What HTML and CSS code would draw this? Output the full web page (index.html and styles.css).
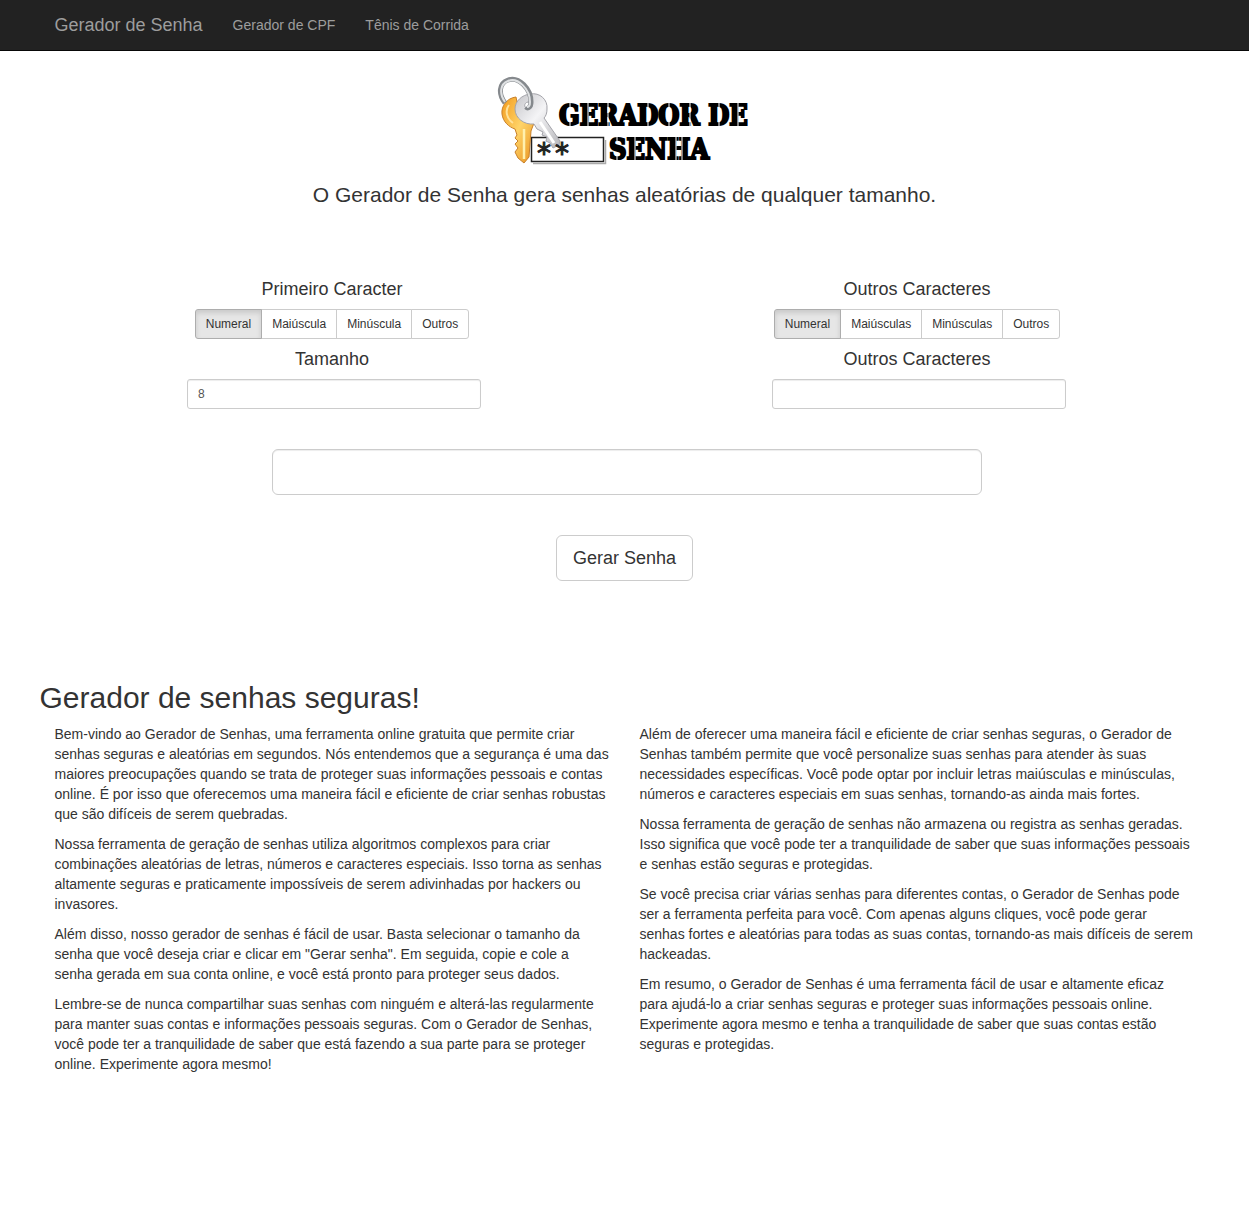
FILE: index.html
```html
<!DOCTYPE html>
<html lang="pt-BR">
<head>
<meta charset="utf-8">
<meta name="viewport" content="width=device-width, initial-scale=1">
<title>Gerador de Senha</title>
<link rel="stylesheet" href="styles.css">
</head>
<body>
<nav class="navbar">
  <div class="container navbar-inner">
    <a class="brand" href="#">Gerador de Senha</a>
    <a class="nav-link" href="#">Gerador de CPF</a>
    <a class="nav-link" href="#">Tênis de Corrida</a>
  </div>
</nav>
<main class="container">
  <header class="intro">
    <svg class="logo" viewBox="0 0 254 98" role="img" aria-label="Gerador de Senha">
      <defs>
        <linearGradient id="gold" x1="0" y1="0" x2="1" y2="1">
          <stop offset="0" stop-color="#f29a1c"/><stop offset=".5" stop-color="#ffd469"/><stop offset="1" stop-color="#e8901c"/>
        </linearGradient>
        <linearGradient id="silver" x1="0" y1="0" x2="1" y2="1">
          <stop offset="0" stop-color="#c4c4c8"/><stop offset=".45" stop-color="#f4f4f6"/><stop offset="1" stop-color="#b4b4b8"/>
        </linearGradient>
      </defs>
      <rect x="33.500" y="62.500" width="72" height="24" fill="#fff" stroke="#222" stroke-width="1.500"/>
      <path d="M35 88.500H107.500V65" fill="none" stroke="#aaa" stroke-width="1.500"/>
      <path d="M18 22C9 23 3 31 4 39C5 47 11 52 17 54L19 60L17 63L20 66L17 69L20 73L17 77L20 83L26 88L31 82L33 56L36 48L22 42Z" fill="url(#gold)" stroke="#c8802a"/>
      <path d="M26 54L26 84" stroke="#fff0ae" stroke-width="2.500"/>
      <path d="M11 30C7 35 8 43 15 48" fill="none" stroke="#ffe29a" stroke-width="2"/>
      <path fill-rule="evenodd" d="M32 19C42 17 50 25 49 34C49 38 48 41 46 43L62 66L61 70L55 73L52 68L48 66L49 62L44 60L45 57L39 54L36 49C26 50 17 43 17 34C17 26 24 20 32 19ZM30 27C25 28 26 34 31 34C36 33 35 27 30 27Z" fill="url(#silver)" stroke="#a4a4aa"/>
      <path d="M42 47L56 68" stroke="#fff" stroke-width="3"/>
      <path d="M7 28C0 19 1 8 10 5C21 1 33 14 33 27C33 32 30 34 28 32" fill="none" stroke="#85898d" stroke-width="5"/>
      <path d="M7 27C1 19 2 9 10 6C20 2 32 14 32 27C32 30 31 32 29 32" fill="none" stroke="#dfe1e3" stroke-width="2"/>
      <text class="logo-mask" x="39 57" y="88">**</text>
      <text class="logo-text" x="61" y="50">GERADOR DE</text>
      <text class="logo-text" x="111" y="84">SENHA</text>
      <path class="stencil" d="M72 27V34M72 46V52M90 27V52M110 27V52M150 27V52M171 27V34M171 45V52M192 27V52M221 27V52M240 27V52M119 62V66M119 81V86M137 62V86M178 62V86M184 62V86"/>
    </svg>
    <p class="lead">O Gerador de Senha gera senhas aleatórias de qualquer tamanho.</p>
  </header>

  <form class="generator">
    <div class="options">
      <section class="option">
        <h4>Primeiro Caracter</h4>
        <div class="btn-group">
          <button class="btn active" type="button">Numeral</button>
          <button class="btn" type="button">Maiúscula</button>
          <button class="btn" type="button">Minúscula</button>
          <button class="btn" type="button">Outros</button>
        </div>
        <h4><label for="tamanho">Tamanho</label></h4>
        <input class="field" id="tamanho" type="text" value="8">
      </section>
      <section class="option">
        <h4>Outros Caracteres</h4>
        <div class="btn-group">
          <button class="btn active" type="button">Numeral</button>
          <button class="btn" type="button">Maiúsculas</button>
          <button class="btn" type="button">Minúsculas</button>
          <button class="btn" type="button">Outros</button>
        </div>
        <h4><label for="outros">Outros Caracteres</label></h4>
        <input class="field" id="outros" type="text">
      </section>
    </div>
    <input class="field result" type="text" aria-label="Senha gerada">
    <button class="submit" type="button">Gerar Senha</button>
  </form>

  <section class="about">
    <h2>Gerador de senhas seguras!</h2>
    <div class="columns">
      <div class="column">
        <p>Bem-vindo ao Gerador de Senhas, uma ferramenta online gratuita que permite criar senhas seguras e aleatórias em segundos. Nós entendemos que a segurança é uma das maiores preocupações quando se trata de proteger suas informações pessoais e contas online. É por isso que oferecemos uma maneira fácil e eficiente de criar senhas robustas que são difíceis de serem quebradas.</p>
        <p>Nossa ferramenta de geração de senhas utiliza algoritmos complexos para criar combinações aleatórias de letras, números e caracteres especiais. Isso torna as senhas altamente seguras e praticamente impossíveis de serem adivinhadas por hackers ou invasores.</p>
        <p>Além disso, nosso gerador de senhas é fácil de usar. Basta selecionar o tamanho da senha que você deseja criar e clicar em "Gerar senha". Em seguida, copie e cole a senha gerada em sua conta online, e você está pronto para proteger seus dados.</p>
        <p>Lembre-se de nunca compartilhar suas senhas com ninguém e alterá-las regularmente para manter suas contas e informações pessoais seguras. Com o Gerador de Senhas, você pode ter a tranquilidade de saber que está fazendo a sua parte para se proteger online. Experimente agora mesmo!</p>
      </div>
      <div class="column">
        <p>Além de oferecer uma maneira fácil e eficiente de criar senhas seguras, o Gerador de Senhas também permite que você personalize suas senhas para atender às suas necessidades específicas. Você pode optar por incluir letras maiúsculas e minúsculas, números e caracteres especiais em suas senhas, tornando-as ainda mais fortes.</p>
        <p>Nossa ferramenta de geração de senhas não armazena ou registra as senhas geradas. Isso significa que você pode ter a tranquilidade de saber que suas informações pessoais e senhas estão seguras e protegidas.</p>
        <p>Se você precisa criar várias senhas para diferentes contas, o Gerador de Senhas pode ser a ferramenta perfeita para você. Com apenas alguns cliques, você pode gerar senhas fortes e aleatórias para todas as suas contas, tornando-as mais difíceis de serem hackeadas.</p>
        <p>Em resumo, o Gerador de Senhas é uma ferramenta fácil de usar e altamente eficaz para ajudá-lo a criar senhas seguras e proteger suas informações pessoais online. Experimente agora mesmo e tenha a tranquilidade de saber que suas contas estão seguras e protegidas.</p>
      </div>
    </div>
  </section>
</main>
</body>
</html>
```
FILE: styles.css
```css
* { box-sizing: border-box; }

body {
  margin: 0;
  background: #fff;
  color: #333;
  font: 14px/20px "Liberation Sans", Arial, sans-serif;
}

.container {
  max-width: 1170px;
  margin: 0 auto;
}

.navbar {
  background: #222;
  border-bottom: 1px solid #080808;
}

.navbar-inner {
  display: flex;
  flex-wrap: wrap;
}

.navbar a {
  padding: 15px;
  color: #9d9d9d;
  text-decoration: none;
}

.navbar .brand { font-size: 18px; }

.intro {
  display: flex;
  flex-direction: column;
  align-items: center;
  padding: 24px 15px 0;
  text-align: center;
}

.logo {
  display: block;
  width: 254px;
  height: 98px;
  overflow: visible;
}

.logo-text {
  font: bold 27px "DejaVu Serif Condensed", "DejaVu Serif", serif;
  fill: #000;
  stroke: #000;
  stroke-width: 2px;
}

.logo-mask {
  font: 28px "DejaVu Sans", sans-serif;
  fill: #222;
  stroke: #222;
}

.stencil {
  fill: none;
  stroke: #fff;
  stroke-width: 1px;
}

.lead {
  margin: 7px 0 0;
  font-size: 21px;
  line-height: 30px;
}

h2, h4 {
  margin: 0;
  font-weight: 400;
}

h4 {
  margin: 10px 0;
  font-size: 18px;
  line-height: 20px;
}

.generator {
  display: flex;
  flex-direction: column;
  align-items: center;
  padding-top: 59px;
}

.options {
  display: flex;
  align-self: stretch;
}

.option {
  flex: 1;
  display: flex;
  flex-direction: column;
  align-items: center;
}

.btn-group { display: flex; }

.btn {
  height: 30px;
  margin: 0 0 0 -1px;
  padding: 5px 10px;
  border: 1px solid #ccc;
  background: #fff;
  color: #333;
  font: 12px/18px "Liberation Sans", Arial, sans-serif;
}

.btn:first-child {
  margin-left: 0;
  border-radius: 3px 0 0 3px;
}

.btn:last-child { border-radius: 0 3px 3px 0; }

.btn.active {
  z-index: 1;
  border-color: #adadad;
  background: #e6e6e6;
  box-shadow: inset 0 3px 5px rgba(0, 0, 0, .125);
}

.field {
  width: 294px;
  max-width: 100%;
  height: 30px;
  margin: 0 0 0 4px;
  padding: 5px 10px;
  border: 1px solid #ccc;
  border-radius: 3px;
  background: #fff;
  box-shadow: inset 0 1px 1px rgba(0, 0, 0, .075);
  color: #555;
  font: 12px/18px "Liberation Sans", Arial, sans-serif;
}

.result {
  width: 710px;
  height: 46px;
  margin-top: 40px;
  padding: 10px 16px;
  border-radius: 6px;
  font-size: 18px;
}

.submit {
  height: 46px;
  margin-top: 40px;
  padding: 10px 16px;
  border: 1px solid #ccc;
  border-radius: 6px;
  background: #fff;
  color: #333;
  font: 18px/24px "Liberation Sans", Arial, sans-serif;
}

.about { padding: 100px 0 140px; }

h2 {
  margin-bottom: 10px;
  font-size: 30px;
  line-height: 33px;
}

.columns { display: flex; }

.column {
  flex: 1;
  padding: 0 15px;
}

.column p { margin: 0 0 10px; }

@media (max-width: 760px) {
  .options, .columns { flex-direction: column; }
}
```
